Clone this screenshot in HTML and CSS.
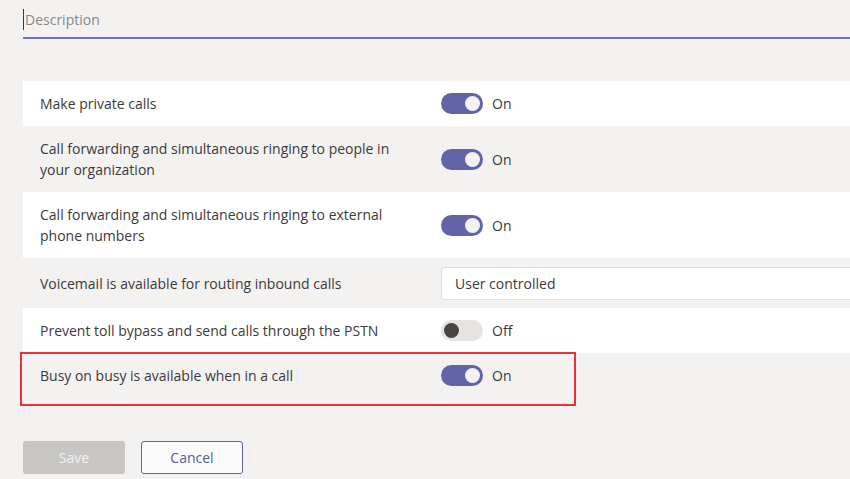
FILE: index.html
```html
<!DOCTYPE html>
<html>

<head>
    <link rel="stylesheet" href="styles.css">
</head>

<body>
    <div class='page'>
        <div class='description'>
            <span class='caret'></span>
            <span class='placeholder'>Description</span>
        </div>

        <div class='settings'>
            <div class='row white'>
                <div class='label'>Make private calls</div>
                <div class='control'><span class='toggle on'></span>On</div>
            </div>
            <div class='row tall'>
                <div class='label'>Call forwarding and simultaneous ringing to people in your organization</div>
                <div class='control'><span class='toggle on'></span>On</div>
            </div>
            <div class='row white tall'>
                <div class='label'>Call forwarding and simultaneous ringing to external phone numbers</div>
                <div class='control'><span class='toggle on'></span>On</div>
            </div>
            <div class='row select-row'>
                <div class='label'>Voicemail is available for routing inbound calls</div>
                <div class='control'>
                    <div class='dropdown'>User controlled</div>
                </div>
            </div>
            <div class='row white'>
                <div class='label'>Prevent toll bypass and send calls through the PSTN</div>
                <div class='control'><span class='toggle off'></span>Off</div>
            </div>
            <div class='row highlighted'>
                <div class='label'>Busy on busy is available when in a call</div>
                <div class='control'><span class='toggle on'></span>On</div>
                <div class='callout'></div>
            </div>
        </div>

        <div class='actions'>
            <button class='button save'>Save</button>
            <button class='button cancel'>Cancel</button>
        </div>
    </div>
</body>

</html>
```

FILE: styles.css
```css
body {
    margin: 0;
    background: #f3f2f1;
    font-family: "Open Sans", "Noto Sans", sans-serif;
    color: #3b3a39;
    overflow: hidden;
}

.page {
    padding: 0 0 0 23px;
}

.description {
    display: flex;
    align-items: center;
    height: 37px;
    border-bottom: 2px solid #6f72b5;
    margin-bottom: 42px;
}

.caret {
    width: 1px;
    height: 21px;
    background: #3b3a39;
    margin-top: 1px;
}

.placeholder {
    font-size: 14px;
    color: #8a8886;
    margin-top: 2px;
    margin-left: 1px;
}

.settings {
    display: flex;
    flex-direction: column;
}

.row {
    position: relative;
    display: grid;
    grid-template-columns: 401px 1fr;
    align-items: center;
    padding: 0 0 0 17px;
    height: 45px;
    font-size: 14px;
    line-height: 21px;
}

.label {
    max-width: 365px;
}

.row.white {
    background: #fff;
}

.row.tall {
    height: 66px;
}

.row.select-row {
    height: 50px;
}

.row.highlighted {
    height: 44px;
}

.control {
    display: flex;
    align-items: center;
    gap: 9px;
    font-size: 14px;
}

.toggle {
    position: relative;
    width: 42px;
    height: 21px;
    border-radius: 11px;
    background: #6264a7;
}

.toggle::after {
    content: '';
    position: absolute;
    top: 3px;
    left: 24px;
    width: 15px;
    height: 15px;
    border-radius: 50%;
    background: #f3f2f1;
}

.toggle.off {
    background: #e6e4e2;
}

.toggle.off::after {
    left: 3px;
    background: #484644;
}

.dropdown {
    flex: 1;
    height: 31px;
    margin-top: 1px;
    display: flex;
    align-items: center;
    padding-left: 13px;
    background: #fff;
    border: 1px solid #e1dfdd;
    border-right: none;
    border-radius: 3px 0 0 3px;
}

.callout {
    position: absolute;
    left: -3px;
    top: -1px;
    width: 552px;
    height: 50px;
    border: 2px solid #e8313a;
}

.actions {
    display: flex;
    gap: 16px;
    margin-top: 44px;
}

.button {
    width: 102px;
    height: 33px;
    border-radius: 3px;
    font-family: "Open Sans", "Noto Sans", sans-serif;
    font-size: 14px;
}

.save {
    background: #c8c6c4;
    border: none;
    color: #f3f2f1;
}

.cancel {
    background: #fbfbfb;
    border: 1px solid #6264a7;
    color: #5b5c8e;
}
```
